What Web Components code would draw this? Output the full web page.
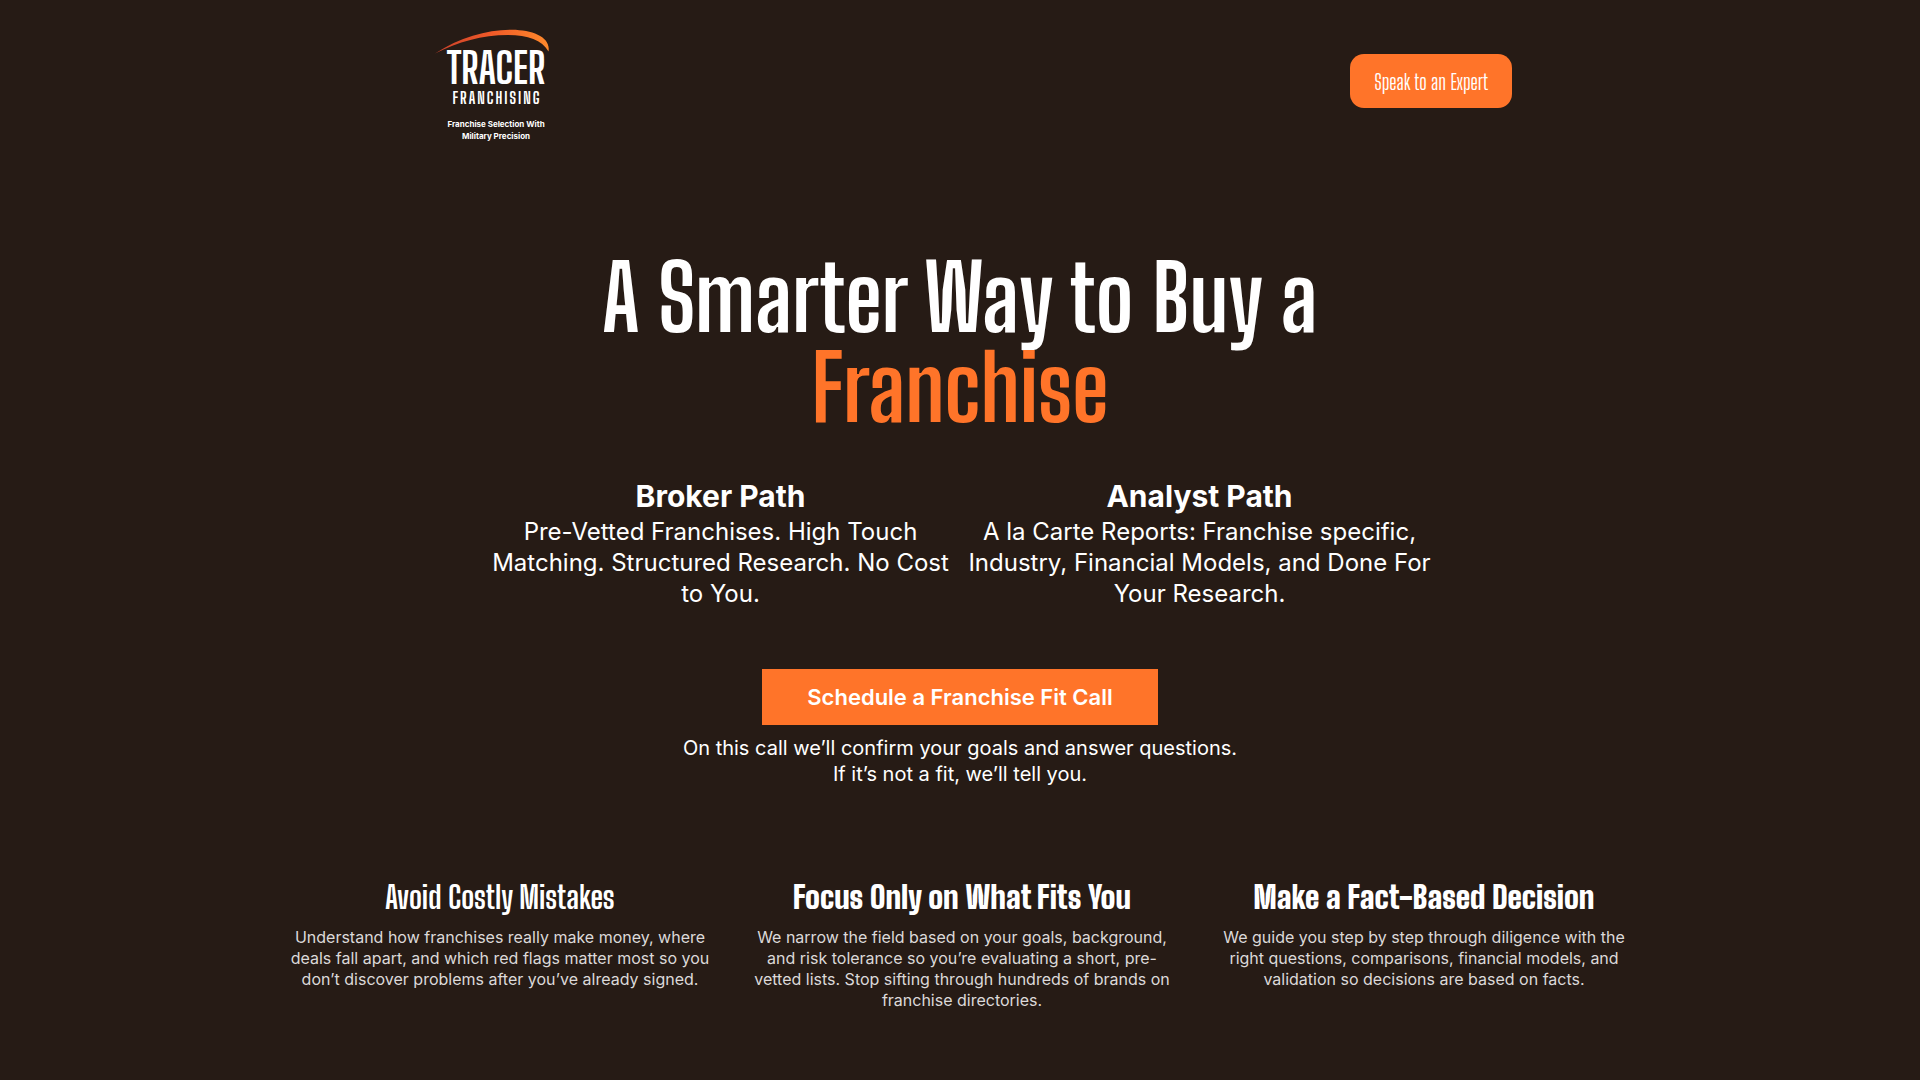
<!DOCTYPE html>
<html lang="en">
<head>
<meta charset="utf-8">
<meta name="viewport" content="width=device-width, initial-scale=1">
<title>Tracer Franchising</title>
<style>
  :root {
    --ink: #261b15;
    --accent: #ff7429;
    --display: "Big Shoulders Display", "Big Shoulders", "Roboto Condensed", sans-serif;
    --body: Inter, "Liberation Sans", sans-serif;
  }
  body {
    margin: 0;
    min-height: 100vh;
    background: var(--ink);
    color: #fff;
    font-family: var(--body);
  }
</style>
</head>
<body>
<tracer-page></tracer-page>
<script>
const define = (name, markup) => {
  const template = document.createElement('template');
  template.innerHTML = markup;
  customElements.define(name, class extends HTMLElement {
    constructor() {
      super();
      this.attachShadow({ mode: 'open' }).append(template.content.cloneNode(true));
    }
  });
};

define('tracer-logo', `
  <style>
    :host { display: block; width: 150px; }
    svg { display: block; width: 100%; }
    text { fill: #fff; text-anchor: middle; }
    .name { font: 700 42px var(--display); }
    .sub { font: 700 16px var(--display); letter-spacing: 2px; }
    .tag { font: 700 8px var(--body); }
  </style>
  <svg viewBox="0 -4 150 140" role="img" aria-label="Tracer Franchising">
    <defs>
      <linearGradient id="arc" x1="0" x2="1">
        <stop offset="0" stop-color="#c9402a"/>
        <stop offset=".5" stop-color="#f05a28"/>
        <stop offset="1" stop-color="#ff8a2c"/>
      </linearGradient>
    </defs>
    <path fill="url(#arc)" d="M15 38.500C40 22 68 14.500 92 14.700C113 15 131 22 128.500 36.500C122 25 108 20 88 20C62 20 38 27 15 38.500Z"/>
    <text class="name" x="76" y="69">TRACER</text>
    <text class="sub" x="77" y="89">FRANCHISING</text>
    <text class="tag" x="76" y="112">Franchise Selection With</text>
    <text class="tag" x="76" y="124">Military Precision</text>
  </svg>`);

define('site-header', `
  <style>
    :host { display: block; }
    header {
      display: flex; justify-content: space-between; align-items: center;
      box-sizing: border-box; max-width: 1104px; margin: 0 auto; padding: 11px 0 11px 12px;
    }
    button {
      height: 54px; padding: 0 24px; border: 0; border-radius: 14px;
      background: var(--accent); color: #fff; font: 400 21px var(--display);
    }
  </style>
  <header>
    <tracer-logo></tracer-logo>
    <button type="button">Speak to an Expert</button>
  </header>`);

define('path-card', `
  <style>
    :host { display: block; text-align: center; }
    h2 { margin: 0; font: 700 30px/40px var(--body); }
    p { margin: 0; font: 400 24px/31px var(--body); }
  </style>
  <h2><slot name="title"></slot></h2>
  <p><slot></slot></p>`);

define('hero-section', `
  <style>
    :host { display: block; text-align: center; }
    h1 { margin: 0 auto; max-width: 960px; font: 700 90px/90px var(--display); }
    h1 span { color: var(--accent); }
    .paths {
      display: grid; grid-template-columns: 1fr 1fr; gap: 16px;
      max-width: 942px; margin: 0 auto; padding: 44px 0 60px;
    }
    button {
      height: 56px; padding: 0 45px; border: 0;
      background: var(--accent); color: #fff; font: 600 22px var(--body);
    }
    p { margin: 10px 0 0; font: 400 20px/26px var(--body); }
  </style>
  <h1>A Smarter Way to Buy a <span>Franchise</span></h1>
  <div class="paths">
    <path-card><span slot="title">Broker Path</span>Pre-Vetted Franchises. High Touch Matching. Structured Research. No Cost to You.</path-card>
    <path-card><span slot="title">Analyst Path</span>A la Carte Reports: Franchise specific, Industry, Financial Models, and Done For Your Research.</path-card>
  </div>
  <button type="button">Schedule a Franchise Fit Call</button>
  <p>On this call we’ll confirm your goals and answer questions.<br>If it’s not a fit, we’ll tell you.</p>`);

define('benefit-card', `
  <style>
    :host { display: block; text-align: center; }
    h3 { margin: 0 0 10px; font: 700 31px/40px var(--display); }
    :host([strong]) h3 { font-weight: 900; }
    p { margin: 0; color: #dcd9d9; font: 400 16px/21px var(--body); }
  </style>
  <h3><slot name="title"></slot></h3>
  <p><slot></slot></p>`);

define('benefit-list', `
  <style>
    :host {
      display: grid; grid-template-columns: repeat(3, 1fr); gap: 40px;
      max-width: 1346px; margin: 0 auto; padding-left: 4px;
    }
  </style>
  <benefit-card><span slot="title">Avoid Costly Mistakes</span>Understand how franchises really make money, where deals fall apart, and which red flags matter most so you don’t discover problems after you’ve already signed.</benefit-card>
  <benefit-card strong><span slot="title">Focus Only on What Fits You</span>We narrow the field based on your goals, background, and risk tolerance so you’re evaluating a short, pre-vetted lists. Stop sifting through hundreds of brands on franchise directories.</benefit-card>
  <benefit-card strong><span slot="title">Make a Fact-Based Decision</span>We guide you step by step through diligence with the right questions, comparisons, financial models, and validation so decisions are based on facts.</benefit-card>`);

define('tracer-page', `
  <style>
    :host { display: block; }
    main { padding: 90px 0 60px; }
    hero-section { margin-bottom: 90px; }
  </style>
  <site-header></site-header>
  <main>
    <hero-section></hero-section>
    <benefit-list></benefit-list>
  </main>`);
</script>
</body>
</html>
